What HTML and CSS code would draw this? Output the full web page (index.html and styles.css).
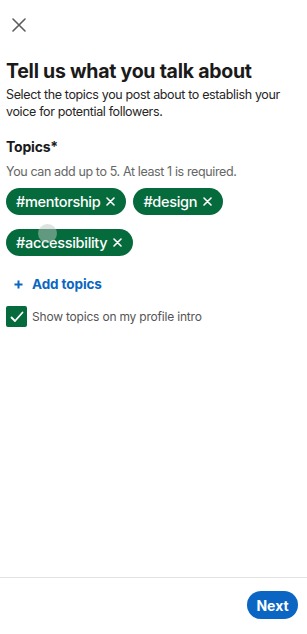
FILE: index.html
```html
<!DOCTYPE html>
<html lang="en">
<head>
<meta charset="utf-8">
<title>Tell us what you talk about</title>
<link rel="stylesheet" href="styles.css">
</head>
<body>
<div class="screen">
  <main class="content">
    <button class="close" aria-label="Close">
      <svg width="14" height="14" viewBox="0 0 14 14"><path d="M1 1 L13 13 M13 1 L1 13" stroke="#5c5c5c" stroke-width="1.6" stroke-linecap="round" fill="none"/></svg>
    </button>
    <h1 class="title">Tell us what you talk about</h1>
    <p class="subtitle">Select the topics you post about to establish your voice for potential followers.</p>
    <h2 class="label">Topics*</h2>
    <p class="hint">You can add up to 5. At least 1 is required.</p>
    <div class="chips">
      <span class="chip">#mentorship<svg class="x" width="9" height="9" viewBox="0 0 9 9"><path d="M1 1 L8 8 M8 1 L1 8" stroke="#fff" stroke-width="1.6" stroke-linecap="round"/></svg></span>
      <span class="chip">#design<svg class="x" width="9" height="9" viewBox="0 0 9 9"><path d="M1 1 L8 8 M8 1 L1 8" stroke="#fff" stroke-width="1.6" stroke-linecap="round"/></svg></span>
      <span class="chip">#accessibility<svg class="x" width="9" height="9" viewBox="0 0 9 9"><path d="M1 1 L8 8 M8 1 L1 8" stroke="#fff" stroke-width="1.6" stroke-linecap="round"/></svg></span>
      <span class="touch"></span>
    </div>
    <button class="add"><svg class="plus" width="9" height="9" viewBox="0 0 9 9"><path d="M4.5 0.5 V8.5 M0.5 4.5 H8.5" stroke="#0a66c2" stroke-width="2"/></svg>Add topics</button>
    <label class="check">
      <span class="box">
        <svg width="14" height="12" viewBox="0 0 14 12"><path d="M1.5 6.5 L5 10 L12.5 1.5" stroke="#fff" stroke-width="1.8" fill="none" stroke-linecap="round" stroke-linejoin="round"/></svg>
      </span>
      <span class="check-text">Show topics on my profile intro</span>
    </label>
  </main>
  <footer class="footer">
    <button class="next">Next</button>
  </footer>
</div>
</body>
</html>
```

FILE: styles.css
```css
* { box-sizing: border-box; }
html, body { margin: 0; padding: 0; background: #fff; }
body {
  font-family: Inter, "Liberation Sans", Arial, sans-serif;
  color: #1d1d1d;
}
.screen {
  display: flex;
  flex-direction: column;
  min-height: 634px;
}
.content {
  flex: 1;
  padding: 0 6px;
  display: flex;
  flex-direction: column;
  align-items: flex-start;
}
.close {
  border: 0;
  background: none;
  padding: 0;
  margin: 18px 0 0 6px;
  width: 14px;
  height: 14px;
  display: flex;
}
.title {
  margin: 26px 0 0;
  font-size: 19.5px;
  line-height: 26px;
  font-weight: 700;
  letter-spacing: -0.25px;
  color: #1a1a1a;
}
.subtitle {
  margin: 2px 0 0;
  font-size: 12.5px;
  line-height: 17px;
  letter-spacing: -0.35px;
  color: #262626;
}
.label {
  margin: 18px 0 0;
  font-size: 14px;
  line-height: 18px;
  font-weight: 700;
  letter-spacing: -0.2px;
  color: #1a1a1a;
}
.hint {
  margin: 7px 0 0;
  font-size: 12.5px;
  line-height: 17px;
  letter-spacing: -0.38px;
  color: #666;
}
.chips {
  position: relative;
  margin-top: 8px;
  display: flex;
  flex-wrap: wrap;
  gap: 14px 7px;
  width: 240px;
}
.chip {
  display: inline-flex;
  align-items: center;
  height: 27px;
  padding: 0 11px 0 10px;
  border-radius: 14px;
  background: #056b3c;
  color: #fff;
  font-size: 14.5px;
  font-weight: 500;
  letter-spacing: -0.3px;
}
.x {
  margin-left: 6px;
}
.touch {
  position: absolute;
  left: 32px;
  top: 36px;
  width: 19px;
  height: 19px;
  border-radius: 50%;
  background: rgba(190, 200, 195, 0.5);
}
.add {
  margin: 19px 0 0 8px;
  border: 0;
  background: none;
  padding: 0;
  display: flex;
  align-items: center;
  font-family: inherit;
  font-size: 13.5px;
  font-weight: 700;
  letter-spacing: -0.1px;
  color: #0a66c2;
  line-height: 18px;
}
.plus {
  margin-right: 9px;
}
.check {
  margin-top: 13px;
  display: flex;
  align-items: center;
  gap: 5px;
}
.box {
  width: 21px;
  height: 21px;
  border-radius: 2px;
  background: #056b3c;
  display: flex;
  align-items: center;
  justify-content: center;
}
.check-text {
  font-size: 12px;
  letter-spacing: -0.2px;
  color: #555;
}
.footer {
  border-top: 1px solid #e3e3e3;
  height: 57px;
  display: flex;
  justify-content: flex-end;
  align-items: flex-start;
  padding: 13px 9px 0 0;
}
.next {
  border: 0;
  height: 28px;
  width: 51px;
  border-radius: 14px;
  background: #0a66c2;
  color: #fff;
  font-family: inherit;
  font-size: 14px;
  font-weight: 700;
  padding: 0;
}
```
